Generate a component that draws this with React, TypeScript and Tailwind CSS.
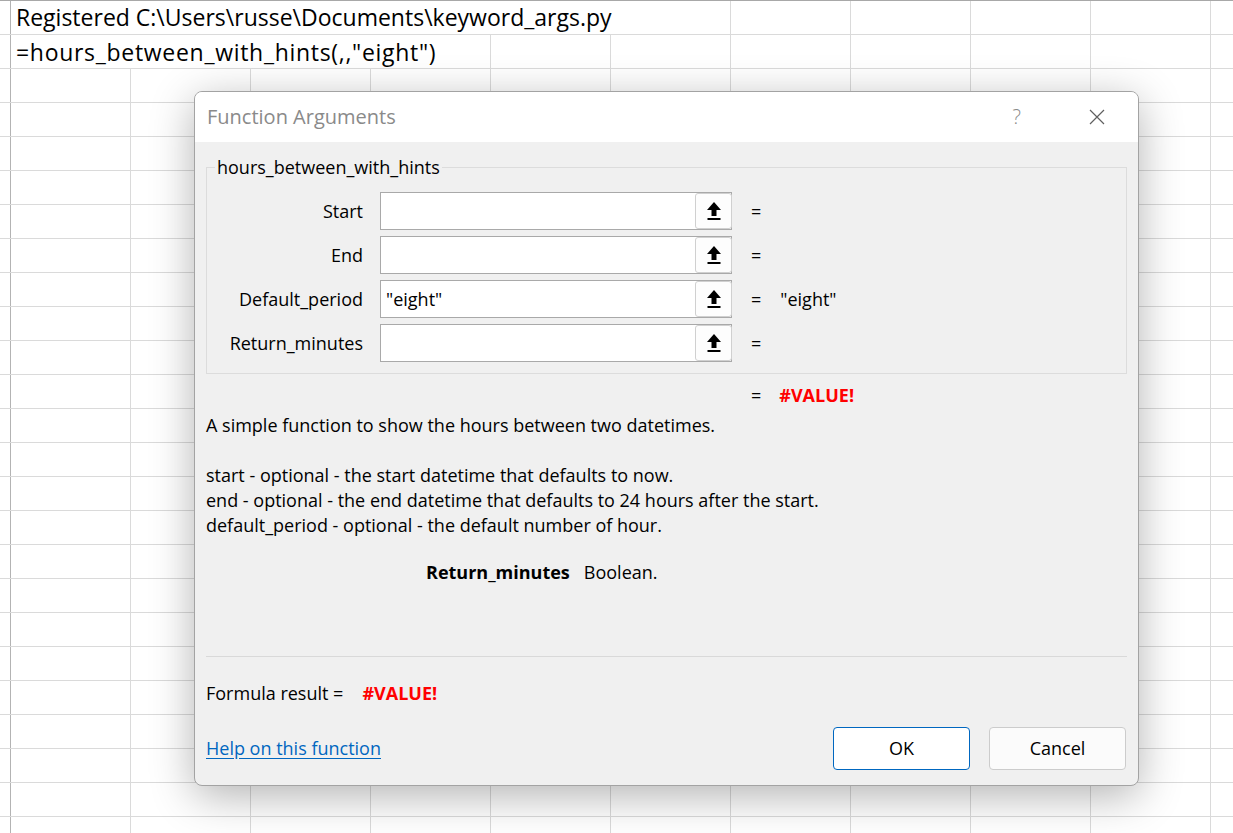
import React from "react";

const FONT = { fontFamily: '"Open Sans", "Noto Sans", Arial, sans-serif' };

function UpIcon() {
  return (
    <svg width="14" height="18" viewBox="0 0 14 18">
      <polygon points="7,0 14,8 9.5,8 9.5,14 4.5,14 4.5,8 0,8" fill="#000" />
      <rect x="0.5" y="16" width="13" height="2" fill="#000" />
    </svg>
  );
}

function GridRow({ first, firstWidth, text, h, wide }: { first?: boolean; firstWidth?: number; text?: string; h: string; wide?: boolean }) {
  const cells: number[] = [];
  let x = 11 + (firstWidth ?? 120);
  while (x < 1233) {
    cells.push(120);
    x += 120;
  }
  return (
    <div className={`flex shrink-0 border-b border-[#dadada] ${h} ${first ? "border-t border-t-[#a8a8a8]" : ""}`}>
      <div className="w-[11px] shrink-0 border-r border-[#b3b3b3]" />
      <div
        className={`shrink-0 border-r border-[#dadada] pl-[5px] flex items-center text-[23px] text-black whitespace-nowrap overflow-visible ${wide ? "tracking-[0.7px] pt-[2px]" : ""}`}
        style={{ width: firstWidth ?? 120 }}
      >
        {text}
      </div>
      {cells.map((w, i) => (
        <div key={i} className="w-[120px] shrink-0 border-r border-[#dadada]" />
      ))}
    </div>
  );
}

function ArgRow({ label, value, result }: { label: string; value?: string; result?: string }) {
  return (
    <div className="flex items-center h-[38px] mb-[6px]">
      <div className="w-[156px] text-right text-[18px] text-black">{label}</div>
      <div className="ml-[17px] w-[352px] h-[38px] border border-[#a9a9a9] bg-white flex">
        <div className="flex-1 pl-[5px] flex items-center text-[18px] text-black">{value}</div>
        <div className="w-[37px] h-[36px] border border-[#d0d0d0] rounded-[3px] bg-[#fdfdfd] flex items-center justify-center -mr-[1px]">
          <UpIcon />
        </div>
      </div>
      <div className="ml-[19px] text-[18px] text-black">=</div>
      <div className="ml-[19px] text-[18px] text-black">{result}</div>
    </div>
  );
}

export default function App() {
  const rows = [];
  for (let i = 2; i < 25; i++) rows.push(<GridRow key={i} h="h-[34px]" />);
  return (
    <div className="relative w-[1233px] h-[833px] overflow-hidden bg-white" style={FONT}>
      <div className="flex flex-col">
        <GridRow first h="h-[35px]" firstWidth={720} text="Registered C:\Users\russe\Documents\keyword_args.py" />
        <GridRow h="h-[34px]" firstWidth={480} wide text={'=hours_between_with_hints(,,"eight")'} />
        {rows}
      </div>

      <div className="absolute left-[194px] top-[91px] w-[945px] h-[695px] rounded-[8px] border border-[#a3a3a3] bg-[#f0f0f0] overflow-hidden shadow-[0_10px_44px_rgba(0,0,0,0.3)] flex flex-col">
        <div className="h-[50px] bg-white flex items-center pl-[12px] shrink-0">
          <div className="text-[20px] text-[#8a8a8a]">Function Arguments</div>
          <div className="ml-auto mr-[68px] text-[20px] text-[#8a8a8a] font-light">?</div>
          <svg className="mr-[33px]" width="16" height="16" viewBox="0 0 16 16">
            <path d="M1 1 L15 15 M15 1 L1 15" stroke="#5f5f5f" strokeWidth="1.2" fill="none" />
          </svg>
        </div>

        <div className="flex flex-col px-[11px]">
          <fieldset className="mt-[15px] h-[217px] border border-[#dcdcdc] px-0 pt-[15px] pb-0 m-0">
            <legend className="ml-[8px] px-[2px] text-[18px] text-black leading-[20px]">hours_between_with_hints</legend>
            <ArgRow label="Start" />
            <ArgRow label="End" />
            <ArgRow label="Default_period" value={'"eight"'} result={'"eight"'} />
            <ArgRow label="Return_minutes" />
          </fieldset>

          <div className="mt-[9px] h-[25px] flex items-center text-[18px]">
            <div className="ml-[545px] text-black">=</div>
            <div className="ml-[18px] text-[#ff0000] font-bold">#VALUE!</div>
          </div>

          <div className="mt-[5px] text-[18px] leading-[25px] text-black">
            <div>A simple function to show the hours between two datetimes.</div>
            <div>&nbsp;</div>
            <div>start - optional - the start datetime that defaults to now.</div>
            <div>end - optional - the end datetime that defaults to 24 hours after the start.</div>
            <div>default_period - optional - the default number of hour.</div>
          </div>

          <div className="mt-[22px] h-[25px] flex items-center text-[18px] text-black">
            <div className="ml-[220px] font-bold">Return_minutes</div>
            <div className="ml-[14px]">Boolean.</div>
          </div>

          <div className="mt-[71px] h-px bg-[#d9d9d9]" />

          <div className="mt-[24px] h-[25px] flex items-center text-[18px]">
            <div className="text-black">Formula result =</div>
            <div className="ml-[19px] text-[#ff0000] font-bold">#VALUE!</div>
          </div>

          <div className="mt-[21px] flex items-center">
            <a className="text-[18px] text-[#0067c0] underline underline-offset-[3px]">Help on this function</a>
            <div className="ml-auto flex gap-[19px] mr-[1px]">
              <div className="w-[137px] h-[43px] rounded-[4px] border border-[#0067c0] bg-white flex items-center justify-center text-[18px] text-black">OK</div>
              <div className="w-[137px] h-[43px] rounded-[4px] border border-[#cccccc] bg-[#fbfbfb] flex items-center justify-center text-[18px] text-black">Cancel</div>
            </div>
          </div>
        </div>
      </div>
    </div>
  );
}
